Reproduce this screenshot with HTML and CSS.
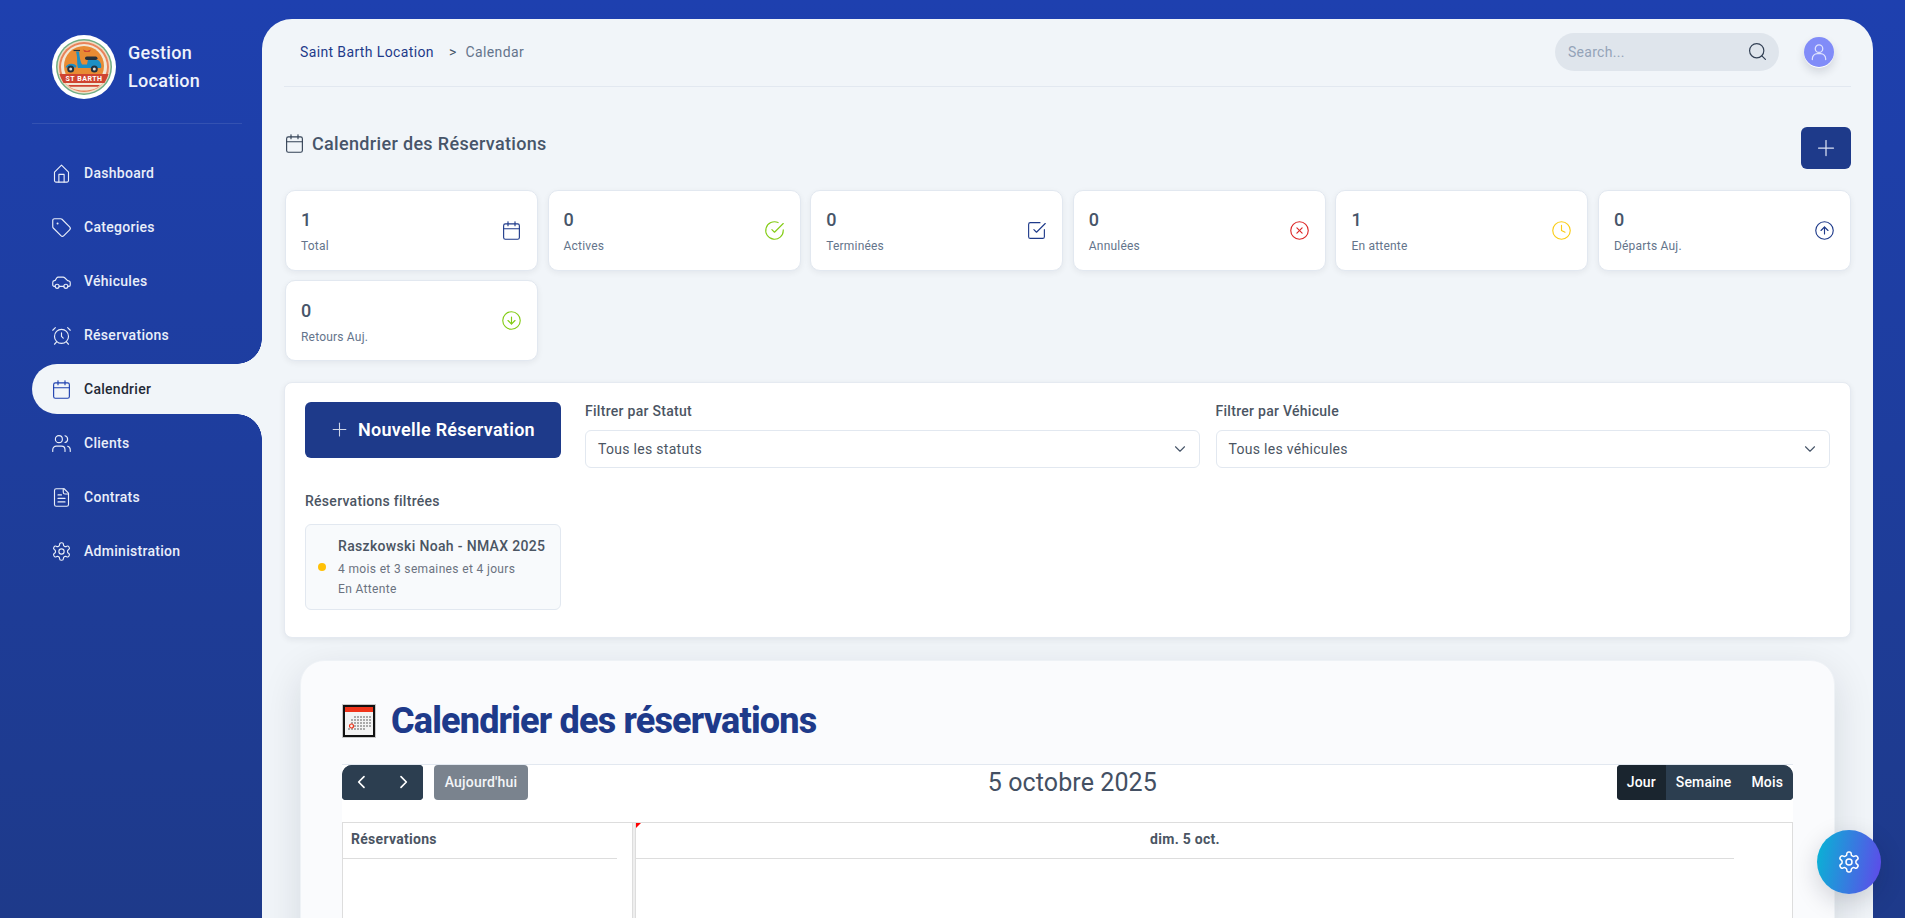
FILE: index.html
```html
<!DOCTYPE html>
<html lang="fr">
<head>
<meta charset="utf-8">
<title>Calendrier des Réservations</title>
<link rel="stylesheet" href="styles.css">
</head>
<body>
<svg class="sprite" aria-hidden="true">
  <symbol id="i-home" viewBox="0 0 24 24"><path d="M4 10.5 12 2.5l8 8V20a1.8 1.8 0 0 1-1.8 1.8H5.800A1.800 1.800 0 0 1 4 20z"/><path d="M9 21.800V13h6v8.800"/></symbol>
  <symbol id="i-tag" viewBox="0 0 24 24"><path d="M12.586 2.586A2 2 0 0 0 11.172 2H4a2 2 0 0 0-2 2v7.172a2 2 0 0 0 .586 1.414l8.704 8.704a2.426 2.426 0 0 0 3.420 0l6.580-6.580a2.426 2.426 0 0 0 0-3.420z"/><circle cx="7.500" cy="7.500" r=".5"/></symbol>
  <symbol id="i-car" viewBox="0 0 24 24"><path d="M4.700 17.500H3.500A1.500 1.500 0 0 1 2 16v-3c0-1 .7-1.800 1.600-2l1.200-.3L6.500 8c.4-.6 1-1 1.700-1H14c.6 0 1.200.3 1.600.7l3.400 3.300 1.600.5c.8.3 1.400 1 1.400 1.900V16a1.500 1.500 0 0 1-1.500 1.500h-1.200"/><path d="M9.300 17.500h5.400"/><circle cx="7" cy="17.500" r="2.300"/><circle cx="17" cy="17.500" r="2.300"/></symbol>
  <symbol id="i-alarm" viewBox="0 0 24 24"><circle cx="12" cy="13" r="8"/><path d="M12 9v4l2 2"/><path d="M5 3 2 6"/><path d="m22 6-3-3"/><path d="M6.400 19.400 4 22"/><path d="M17.600 19.400 20 22"/></symbol>
  <symbol id="i-cal" viewBox="0 0 24 24"><rect x="3" y="4.500" width="18" height="17.500" rx="2"/><path d="M16 2v4.500"/><path d="M8 2v4.500"/><path d="M3 10h18"/></symbol>
  <symbol id="i-users" viewBox="0 0 24 24"><path d="M16 21v-2a4 4 0 0 0-4-4H6a4 4 0 0 0-4 4v2"/><circle cx="9" cy="7" r="4"/><path d="M22 21v-2a4 4 0 0 0-3-3.870"/><path d="M16 3.130a4 4 0 0 1 0 7.750"/></symbol>
  <symbol id="i-file" viewBox="0 0 24 24"><path d="M15 2H6a2 2 0 0 0-2 2v16a2 2 0 0 0 2 2h12a2 2 0 0 0 2-2V7z"/><path d="M14 2v4a2 2 0 0 0 2 2h4"/><path d="M12 9H8"/><path d="M16 13H8"/><path d="M16 17H8"/></symbol>
  <symbol id="i-gear" viewBox="0 0 24 24"><path d="M12.220 2h-.44a2 2 0 0 0-2 2v.18a2 2 0 0 1-1 1.730l-.43.25a2 2 0 0 1-2 0l-.15-.08a2 2 0 0 0-2.730.73l-.22.38a2 2 0 0 0 .73 2.730l.15.1a2 2 0 0 1 1 1.720v.51a2 2 0 0 1-1 1.740l-.15.09a2 2 0 0 0-.73 2.730l.22.38a2 2 0 0 0 2.730.73l.15-.08a2 2 0 0 1 2 0l.43.25a2 2 0 0 1 1 1.730V20a2 2 0 0 0 2 2h.44a2 2 0 0 0 2-2v-.18a2 2 0 0 1 1-1.730l.43-.25a2 2 0 0 1 2 0l.15.08a2 2 0 0 0 2.730-.73l.22-.39a2 2 0 0 0-.73-2.730l-.15-.08a2 2 0 0 1-1-1.740v-.5a2 2 0 0 1 1-1.740l.15-.09a2 2 0 0 0 .73-2.730l-.22-.38a2 2 0 0 0-2.730-.73l-.15.08a2 2 0 0 1-2 0l-.43-.25a2 2 0 0 1-1-1.730V4a2 2 0 0 0-2-2z"/><circle cx="12" cy="12" r="3"/></symbol>
  <symbol id="i-plus" viewBox="0 0 24 24"><path d="M12 3v18"/><path d="M3 12h18"/></symbol>
  <symbol id="i-chev" viewBox="0 0 24 24"><path d="m6 9 6 6 6-6"/></symbol>
</svg>

<aside class="sidebar">
  <div class="brand">
    <svg class="logo" viewBox="0 0 64 64" aria-hidden="true">
      <circle cx="32" cy="32" r="32" fill="#fff"/>
      <circle cx="32" cy="32" r="28" fill="#6fae84"/>
      <circle cx="32" cy="32" r="26.500" fill="#f0dcc4"/>
      <circle cx="32" cy="32" r="25" fill="#e9835a"/>
      <circle cx="32" cy="32" r="23" fill="#f2e7d5"/>
      <circle cx="32" cy="31" r="20" fill="#e88b33"/>
      <path d="M7.500 39h49c-.9 3.200-2.300 6-4 9h-41c-1.700-3-3.100-5.800-4-9z" fill="#cf4430"/>
      <path d="M13 48h38c-4 5-11 7.500-19 7.500S17 53 13 48z" fill="#f2e7d5"/>
      <path d="M16 50h32c-1 .8-1.500 1.200-2.500 1.800h-27c-1-.6-1.500-1-2.500-1.800z" fill="#cf4430"/>
      <text class="logo-text" x="32" y="46">ST BARTH</text>
      <path d="M24 16.500h3c.5 5.500 1.500 10.500 3 13h5c.5-2 .5-3.500 1-4.500h10c2.500 1.500 4 5 3 8H26c-1.500-5 0-9-2-16.500z" fill="#1c8fc4"/>
      <path d="M13.500 32.500c1-4 8-5.500 11-1.500l-.5 1.500z" fill="#1c8fc4"/>
      <rect x="33" y="21.500" width="12.500" height="3.600" rx="1.800" fill="#23303c"/>
      <path d="M21.500 15.500h6.500" stroke="#23303c" stroke-width="1.200"/>
      <path d="M31 14.500l4 1.500 4-1.500-1.500 2.500h-5z" fill="#cf4430"/>
      <circle cx="18.700" cy="34" r="3.500" fill="#23303c"/>
      <circle cx="42.300" cy="34" r="3.500" fill="#23303c"/>
      <circle cx="18.700" cy="34" r="1.500" fill="#d8d8d8"/>
      <circle cx="42.300" cy="34" r="1.500" fill="#d8d8d8"/>
    </svg>
    <div class="brand-name">Gestion<br>Location</div>
  </div>
  <nav class="nav">
    <a class="nav-item"><svg class="ico nav-ico"><use href="#i-home"/></svg><span>Dashboard</span></a>
    <a class="nav-item"><svg class="ico nav-ico"><use href="#i-tag"/></svg><span>Categories</span></a>
    <a class="nav-item"><svg class="ico nav-ico"><use href="#i-car"/></svg><span>Véhicules</span></a>
    <a class="nav-item"><svg class="ico nav-ico"><use href="#i-alarm"/></svg><span>Réservations</span></a>
    <a class="nav-item active"><svg class="ico nav-ico"><use href="#i-cal"/></svg><span>Calendrier</span></a>
    <a class="nav-item"><svg class="ico nav-ico"><use href="#i-users"/></svg><span>Clients</span></a>
    <a class="nav-item"><svg class="ico nav-ico"><use href="#i-file"/></svg><span>Contrats</span></a>
    <a class="nav-item"><svg class="ico nav-ico"><use href="#i-gear"/></svg><span>Administration</span></a>
  </nav>
</aside>

<main class="main">
  <header class="topbar">
    <div class="crumbs"><span class="crumb-root">Saint Barth Location</span><span class="crumb-sep">&gt;</span><span class="crumb-cur">Calendar</span></div>
    <div class="top-right">
      <div class="search"><span>Search...</span><svg class="ico search-ico" viewBox="0 0 24 24"><circle cx="11" cy="11" r="9"/><path d="m22 22-4.500-4.500"/></svg></div>
      <div class="avatar"><svg class="ico avatar-ico" viewBox="0 0 24 24"><circle cx="12" cy="8" r="4.500"/><path d="M4 21v-1a6 6 0 0 1 6-6h4a6 6 0 0 1 6 6v1"/></svg></div>
    </div>
  </header>

  <div class="page-head">
    <h1 class="page-title"><svg class="ico title-ico"><use href="#i-cal"/></svg>Calendrier des Réservations</h1>
    <button class="add-btn" type="button"><svg class="ico add-ico"><use href="#i-plus"/></svg></button>
  </div>

  <section class="stats">
    <div class="stat"><div><div class="stat-num">1</div><div class="stat-label">Total</div></div><svg class="ico stat-ico c-navy"><use href="#i-cal"/></svg></div>
    <div class="stat"><div><div class="stat-num">0</div><div class="stat-label">Actives</div></div><svg class="ico stat-ico c-green" viewBox="0 0 24 24"><path d="M22 11.100V12a10 10 0 1 1-5.900-9.100"/><path d="M22 4 12 14l-3-3"/></svg></div>
    <div class="stat"><div><div class="stat-num">0</div><div class="stat-label">Terminées</div></div><svg class="ico stat-ico c-navy" viewBox="0 0 24 24"><path d="M21 11v8a2 2 0 0 1-2 2H5a2 2 0 0 1-2-2V5a2 2 0 0 1 2-2h11"/><path d="m9 11 3 3L22 4"/></svg></div>
    <div class="stat"><div><div class="stat-num">0</div><div class="stat-label">Annulées</div></div><svg class="ico stat-ico c-red" viewBox="0 0 24 24"><circle cx="12" cy="12" r="10"/><path d="m15 9-6 6"/><path d="m9 9 6 6"/></svg></div>
    <div class="stat"><div><div class="stat-num">1</div><div class="stat-label">En attente</div></div><svg class="ico stat-ico c-yellow" viewBox="0 0 24 24"><circle cx="12" cy="12" r="10"/><path d="M12 6v6l4 2"/></svg></div>
    <div class="stat"><div><div class="stat-num">0</div><div class="stat-label">Départs Auj.</div></div><svg class="ico stat-ico c-navy" viewBox="0 0 24 24"><circle cx="12" cy="12" r="10"/><path d="m16 12-4-4-4 4"/><path d="M12 16V8"/></svg></div>
    <div class="stat"><div><div class="stat-num">0</div><div class="stat-label">Retours Auj.</div></div><svg class="ico stat-ico c-green" viewBox="0 0 24 24"><circle cx="12" cy="12" r="10"/><path d="m8 12 4 4 4-4"/><path d="M12 8v8"/></svg></div>
  </section>

  <section class="panel">
    <div class="panel-side">
      <button class="new-btn" type="button"><svg class="ico new-ico"><use href="#i-plus"/></svg>Nouvelle Réservation</button>
      <div class="list-title">Réservations filtrées</div>
      <div class="resa">
        <span class="resa-dot"></span>
        <div class="resa-body">
          <div class="resa-name">Raszkowski Noah - NMAX 2025</div>
          <div class="resa-meta">4 mois et 3 semaines et 4 jours</div>
          <div class="resa-meta">En Attente</div>
        </div>
      </div>
    </div>
    <div class="filters">
      <div class="filter">
        <div class="filter-label">Filtrer par Statut</div>
        <div class="select"><span>Tous les statuts</span><svg class="ico chev"><use href="#i-chev"/></svg></div>
      </div>
      <div class="filter">
        <div class="filter-label">Filtrer par Véhicule</div>
        <div class="select"><span>Tous les véhicules</span><svg class="ico chev"><use href="#i-chev"/></svg></div>
      </div>
    </div>
  </section>

  <section class="cal-card">
    <h2 class="cal-heading">
      <svg class="cal-emoji" viewBox="0 0 34 34" aria-hidden="true">
        <rect x=".5" y=".5" width="33" height="33" fill="#f1f1f1" stroke="#c9c9c9"/>
        <rect x="2" y="2" width="30" height="30" fill="#f3f3f3" stroke="#111" stroke-width="2"/>
        <rect x="3" y="3" width="28" height="5" fill="#f0341a"/>
        <g class="cal-dots">
          <rect x="12" y="12" width="2" height="2"/><rect x="15" y="12" width="2" height="2"/><rect x="18" y="12" width="2" height="2"/><rect x="21" y="12" width="2" height="2"/><rect x="24" y="12" width="2" height="2"/><rect x="27" y="12" width="2" height="2"/>
          <rect x="9" y="15" width="2" height="2"/><rect x="12" y="15" width="2" height="2"/><rect x="15" y="15" width="2" height="2"/><rect x="18" y="15" width="2" height="2"/><rect x="21" y="15" width="2" height="2"/><rect x="24" y="15" width="2" height="2"/><rect x="27" y="15" width="2" height="2"/>
          <rect x="9" y="18" width="2" height="2"/><rect x="12" y="18" width="2" height="2"/><rect x="15" y="18" width="2" height="2"/><rect x="18" y="18" width="2" height="2"/><rect x="21" y="18" width="2" height="2"/><rect x="24" y="18" width="2" height="2"/><rect x="27" y="18" width="2" height="2"/>
          <rect x="12" y="21" width="2" height="2"/><rect x="15" y="21" width="2" height="2"/><rect x="18" y="21" width="2" height="2"/><rect x="21" y="21" width="2" height="2"/><rect x="24" y="21" width="2" height="2"/><rect x="27" y="21" width="2" height="2"/>
          <rect x="6" y="24" width="2" height="2"/><rect x="9" y="24" width="2" height="2"/><rect x="12" y="24" width="2" height="2"/><rect x="15" y="24" width="2" height="2"/><rect x="18" y="24" width="2" height="2"/><rect x="21" y="24" width="2" height="2"/>
        </g>
        <circle cx="9.500" cy="22" r="2" fill="none" stroke="#f0341a" stroke-width="1.200"/>
      </svg>
      <span>Calendrier des réservations</span>
    </h2>
    <div class="fc">
      <div class="fc-toolbar">
        <div class="fc-left">
          <div class="btn-group nav-group">
            <button class="fc-btn fc-arrow" type="button"><svg class="ico arrow-ico" viewBox="0 0 24 24"><path d="m15 4-8 8 8 8"/></svg></button>
            <button class="fc-btn fc-arrow" type="button"><svg class="ico arrow-ico" viewBox="0 0 24 24"><path d="m9 4 8 8-8 8"/></svg></button>
          </div>
          <button class="fc-btn fc-today" type="button">Aujourd'hui</button>
        </div>
        <div class="fc-title">5 octobre 2025</div>
        <div class="btn-group view-group">
          <button class="fc-btn is-active" type="button">Jour</button>
          <button class="fc-btn" type="button">Semaine</button>
          <button class="fc-btn" type="button">Mois</button>
        </div>
      </div>
      <div class="fc-grid">
        <div class="fc-res"><div class="fc-head fc-res-head">Réservations</div></div>
        <div class="fc-divider"></div>
        <div class="fc-time"><div class="fc-head fc-time-head">dim. 5 oct.</div><span class="fc-now"></span></div>
      </div>
    </div>
  </section>
</main>

<button class="fab" type="button"><svg class="ico fab-ico"><use href="#i-gear"/></svg></button>
</body>
</html>
```
FILE: styles.css
```css
* { box-sizing: border-box; }
html, body { height: 100%; }
body {
  margin: 0;
  display: flex;
  overflow: hidden;
  font-family: Roboto, "Liberation Sans", sans-serif;
  letter-spacing: .28px;
  background: linear-gradient(180deg, #1e40af 0%, #1e3a8a 100%);
  color: #334155;
}
.sprite { width: 0; height: 0; overflow: hidden; display: block; flex: none; }
button { font-family: inherit; letter-spacing: inherit; border: 0; cursor: pointer; }
h1, h2 { margin: 0; }

.ico {
  fill: none;
  stroke: currentColor;
  stroke-width: 1.500;
  stroke-linecap: round;
  stroke-linejoin: round;
  flex: none;
}

/* Sidebar */
.sidebar { width: 262px; flex: none; padding-left: 32px; }
.brand {
  display: flex;
  align-items: center;
  gap: 12px;
  padding: 35px 0 24px 20px;
  margin-right: 20px;
  border-bottom: 1px solid rgba(255, 255, 255, .1);
  color: #eef2fb;
}
.logo { width: 64px; height: 64px; flex: none; }
.logo-text {
  font-family: Roboto, sans-serif;
  font-size: 7px;
  font-weight: 700;
  fill: #fff;
  text-anchor: middle;
  letter-spacing: .5px;
}
.brand-name { font-size: 18px; font-weight: 500; line-height: 28px; }
.nav { display: flex; flex-direction: column; gap: 4px; margin-top: 24px; }
.nav-item {
  position: relative;
  display: flex;
  align-items: center;
  gap: 12px;
  height: 50px;
  padding-left: 19px;
  font-size: 14px;
  font-weight: 500;
  color: #e9eef9;
  border-radius: 25px 0 0 25px;
}
.nav-ico { width: 21px; height: 21px; stroke-width: 1.300; }
.nav-item.active { background: #f1f5f9; color: #1f2937; }
.nav-item.active .nav-ico { color: #1e40af; }
.nav-item.active::before,
.nav-item.active::after {
  content: "";
  position: absolute;
  right: 0;
  width: 25px;
  height: 25px;
}
.nav-item.active::before {
  top: -25px;
  background: radial-gradient(circle at 0 0, transparent 24.500px, #f1f5f9 25px);
}
.nav-item.active::after {
  bottom: -25px;
  background: radial-gradient(circle at 0 100%, transparent 24.500px, #f1f5f9 25px);
}

/* Main */
.main {
  flex: 1;
  min-width: 0;
  height: calc(100vh - 19px);
  margin: 19px 32px 0 0;
  padding: 0 22px;
  background: #f1f5f9;
  border-radius: 30px 30px 0 0;
  overflow: hidden;
}
.topbar {
  display: flex;
  align-items: center;
  justify-content: space-between;
  height: 68px;
  padding: 0 17px 2px 16px;
  border-bottom: 1px solid #e2e8f0;
}
.crumbs { display: flex; align-items: center; font-size: 14px; letter-spacing: .37px; }
.crumb-root { color: #1e3a8a; }
.crumb-sep { margin: 0 9px 0 15px; color: #475569; }
.crumb-cur { color: #64748b; }
.top-right { display: flex; align-items: center; gap: 25px; }
.search {
  display: flex;
  align-items: center;
  justify-content: space-between;
  width: 224px;
  height: 38px;
  padding: 0 12px 0 13px;
  border-radius: 19px;
  background: #dfe5ec;
  color: #94a3b8;
  font-size: 14px;
}
.search-ico { width: 19px; height: 19px; color: #334155; }
.avatar {
  display: flex;
  align-items: center;
  justify-content: center;
  width: 30px;
  height: 30px;
  border-radius: 50%;
  background: #818cf8;
  box-shadow: 0 1px 0 #fff, 0 5px 10px rgba(15, 23, 42, .14);
}
.avatar-ico { width: 20px; height: 20px; color: #dfe3fd; }

.page-head {
  display: flex;
  align-items: flex-start;
  justify-content: space-between;
  padding-top: 40px;
  height: 102.600px;
}
.page-title {
  display: flex;
  align-items: center;
  gap: 7px;
  height: 32px;
  font-size: 18px;
  font-weight: 500;
  color: #475569;
  letter-spacing: .33px;
}
.title-ico { width: 21px; height: 21px; color: #334155; stroke-width: 1.300; }
.add-btn {
  display: flex;
  align-items: center;
  justify-content: center;
  width: 50px;
  height: 42px;
  border-radius: 6px;
  background: #1e3a8a;
  color: #dbe2f3;
}
.add-ico { width: 20px; height: 20px; }

.stats { display: grid; grid-template-columns: repeat(6, 1fr); gap: 9.600px; margin-left: 1px; }
.stat {
  display: flex;
  align-items: center;
  justify-content: space-between;
  height: 81px;
  padding: 0 15px 0 15px;
  background: #fff;
  border: 1px solid #e2e8f0;
  border-radius: 10px;
  box-shadow: 0 2px 6px rgba(15, 23, 42, .06);
}
.stat-num { font-size: 18px; font-weight: 500; line-height: 26px; color: #475569; letter-spacing: 0; }
.stat-label { font-size: 12px; line-height: 14px; margin-top: 6px; color: #64748b; letter-spacing: .2px; }
.stat-ico { width: 21px; height: 21px; stroke-width: 1.300; }
.c-navy { color: #1e3a8a; }
.c-green { color: #84cc16; }
.c-red { color: #dc2626; }
.c-yellow { color: #facc15; }

.panel {
  display: flex;
  gap: 24px;
  margin-top: 20.800px;
  padding: 19px 20px;
  height: 256px;
  background: #fff;
  border: 1px solid #e5eaf1;
  border-radius: 8px;
  box-shadow: 0 2px 6px rgba(15, 23, 42, .07);
}
.panel-side { width: 256px; flex: none; }
.new-btn {
  display: flex;
  align-items: center;
  justify-content: center;
  gap: 10px;
  width: 256px;
  height: 56px;
  padding-bottom: 2px;
  border-radius: 6px;
  background: #1e3a8a;
  color: #fff;
  font-size: 18px;
  font-weight: 600;
}
.new-ico { width: 17px; height: 17px; color: #cfd6e8; }
.list-title { margin-top: 34px; font-size: 14px; font-weight: 500; line-height: 18px; color: #4b5563; }
.resa {
  display: flex;
  align-items: center;
  gap: 12px;
  height: 86px;
  margin-top: 14px;
  padding: 0 12px;
  background: #f8fafc;
  border: 1px solid #e2e8f0;
  border-radius: 6px;
}
.resa-dot { width: 8px; height: 8px; border-radius: 50%; background: #ffc107; flex: none; }
.resa-body { padding-top: 3px; }
.resa-name { font-size: 14px; font-weight: 500; line-height: 18px; color: #4b5563; letter-spacing: .33px; white-space: nowrap; }
.resa-meta { font-size: 12px; line-height: 20px; color: #6b7280; letter-spacing: .35px; }
.resa-name + .resa-meta { margin-top: 4px; }

.filters { flex: 1; display: grid; grid-template-columns: 1fr 1fr; gap: 16px; align-content: start; }
.filter-label { font-size: 14px; font-weight: 500; line-height: 18px; color: #4b5563; }
.select {
  display: flex;
  align-items: center;
  justify-content: space-between;
  height: 38px;
  margin-top: 10px;
  padding: 0 10px 0 12px;
  border: 1px solid #e2e8f0;
  border-radius: 6px;
  background: #fff;
  font-size: 14px;
  color: #4b5563;
  letter-spacing: .3px;
}
.chev { width: 18px; height: 18px; color: #475569; }

/* Calendar card */
.cal-card {
  margin: 22px 16px 0;
  padding: 41px 41px 0 41px;
  height: 500px;
  background: #fafbfd;
  border: 1px solid #eef2f6;
  border-radius: 24px;
  box-shadow: 0 12px 40px rgba(15, 23, 42, .12);
}
.cal-heading {
  display: flex;
  align-items: center;
  gap: 15px;
  height: 38px;
  margin-bottom: 24px;
  font-size: 36px;
  font-weight: 800;
  color: #1e3a8a;
  letter-spacing: -.82px;
}
.cal-emoji { width: 34px; height: 34px; flex: none; }
.cal-dots rect { fill: #a9a9a9; }
.fc { background: #fff; border-top: 1px solid #e2e8f0; height: 400px; }
.fc-toolbar { display: flex; align-items: center; justify-content: space-between; height: 35px; margin-bottom: 22px; }
.fc-left { display: flex; gap: 11px; }
.btn-group { display: flex; height: 35px; overflow: hidden; background: #2c3e50; border-radius: 4px; }
.nav-group { border-top-left-radius: 10px; }
.view-group { border-top-right-radius: 10px; }
.fc-btn { height: 35px; padding: 0 10px; background: #2c3e50; color: #fff; font-size: 14px; font-weight: 500; letter-spacing: .15px; }
.fc-btn.is-active { background: #1a252f; }
.fc-arrow { display: flex; align-items: center; justify-content: center; width: 40.500px; padding: 0; }
.arrow-ico { width: 16px; height: 16px; stroke-width: 2.500; }
.fc-today { border-radius: 4px; background: #7a838e; color: #f4f5f7; padding: 0 9px; width: 94px; letter-spacing: .2px; }
.fc-title { font-size: 25px; font-weight: 400; color: #445063; letter-spacing: .1px; }
.fc-grid { display: flex; height: 340px; border: 1px solid #ddd; border-width: 1px 1px 0; }
.fc-res { width: 290px; flex: none; padding-right: 15px; border-right: 1px solid #ddd; }
.fc-divider { width: 3px; flex: none; background: #eee; border-right: 1px solid #ddd; }
.fc-time { position: relative; flex: 1; padding-right: 58px; }
.fc-head {
  height: 36px;
  border-bottom: 1px solid #ddd;
  font-size: 14px;
  font-weight: 700;
  line-height: 33px;
  color: #4b5563;
}
.fc-res-head { padding-left: 8px; }
.fc-time-head { text-align: center; }
.fc-now {
  position: absolute;
  top: 0;
  left: 0;
  border-style: solid;
  border-width: 5px 5px 0 0;
  border-color: #f00 transparent transparent transparent;
}

/* Floating button */
.fab {
  position: fixed;
  left: 1817px;
  top: 830px;
  display: flex;
  align-items: center;
  justify-content: center;
  width: 64px;
  height: 64px;
  border-radius: 50%;
  background: linear-gradient(100deg, #06b6d4 0%, #6246ea 100%);
  box-shadow: 0 8px 24px rgba(15, 23, 42, .18);
  color: #fff;
}
.fab-ico { width: 24px; height: 24px; }
```
